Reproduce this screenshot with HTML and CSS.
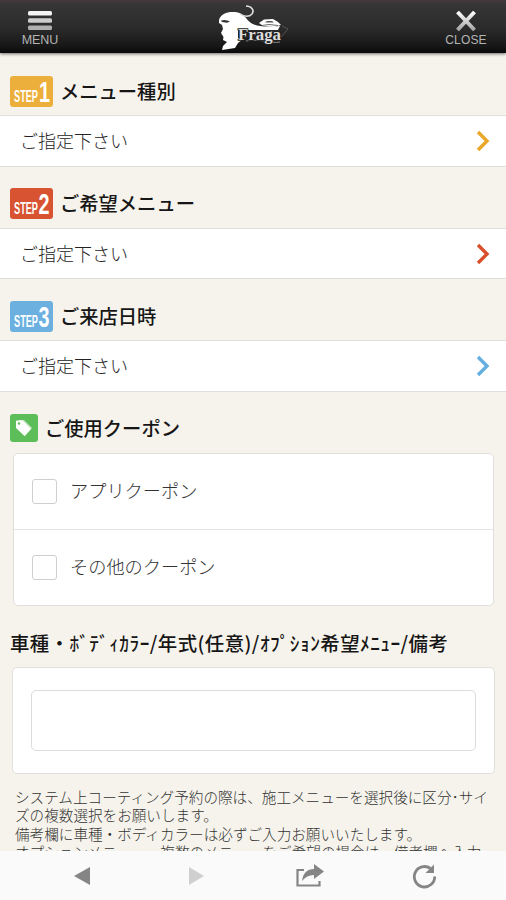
FILE: index.html
```html
<!DOCTYPE html>
<html lang="ja">
<head>
<meta charset="utf-8">
<title>ご予約</title>
<link rel="stylesheet" href="styles.css">
</head>
<body>
<div class="app">
  <header class="topbar">
    <div class="top-btn menu">
      <svg width="26" height="22" viewBox="0 0 26 22">
        <defs><linearGradient id="metal" gradientUnits="userSpaceOnUse" x1="0" y1="2" x2="0" y2="19"><stop offset="0" stop-color="#fff"/><stop offset="1" stop-color="#aaa"/></linearGradient></defs>
        <rect x="1" y="1" width="24" height="4.5" rx="1.5" fill="#f4f4f4"/>
        <rect x="1" y="8.2" width="24" height="4.5" rx="1.5" fill="#ccc"/>
        <rect x="1" y="15.4" width="24" height="4.5" rx="1.5" fill="#b0b0b0"/>
      </svg>
      <span>MENU</span>
    </div>
    <svg class="logo" width="76" height="50" viewBox="0 0 76 50">
      <path d="M1 20C3 13 11 11 20 12.500C26 14 28 19 33 23C39 27 50 27 62 26L60 30L20 30V38L25 39L20 43L17 48L4 50L5 46L9 42L5 40L5.500 37L3 33L5 29L4 25L1 23Z" fill="#fff"/>
      <path d="M28 6C33 6 37 10 34 14C31.500 17 26 17 22 14" fill="none" stroke="#ddd" stroke-width="1.500"/>
      <path d="M3 20.500C6 19.500 9 19.800 12 21.500L9 22.800L4 22Z" fill="#333"/>
      <path d="M41 23L46 19.500L55 19L60 22L63 25L56 27L45 26Z" fill="#fff"/>
      <path d="M47 22.500L49 21H54L56 22.500Z" fill="#555"/>
      <path d="M44 25.500L51 24.500L60 25.500" fill="none" stroke="#444" stroke-width=".8"/>
      <path d="M28 41C43 38 52 44 62 42" fill="none" stroke="#888" stroke-width="1"/>
      <text class="logo-text" x="20" y="40" textLength="43" lengthAdjust="spacingAndGlyphs">Fraga</text>
      <path d="M64 26L70 29L63 37" fill="none" stroke="#555" stroke-width="1"/>
    </svg>
    <div class="top-btn close">
      <svg width="24" height="22" viewBox="0 0 24 22">
        <path d="M3.500 2L20.500 20M20.500 2L3.500 20" stroke="url(#metal)" stroke-width="4"/>
      </svg>
      <span>CLOSE</span>
    </div>
  </header>

  <main class="content">
    <h2 class="heading">
      <svg class="step amber" width="43" height="31" viewBox="0 0 43 31"><text x="4" y="26" class="st" textLength="24" lengthAdjust="spacingAndGlyphs">STEP</text><text x="29" y="26" class="num" textLength="11" lengthAdjust="spacingAndGlyphs">1</text></svg>
      <span>メニュー種別</span>
    </h2>
    <div class="row"><span>ご指定下さい</span><svg class="chev" width="14" height="22" viewBox="0 0 14 22"><path d="M2 2L11 11L2 20" stroke="#eba728"/></svg></div>

    <h2 class="heading">
      <svg class="step red" width="43" height="31" viewBox="0 0 43 31"><text x="4" y="26" class="st" textLength="24" lengthAdjust="spacingAndGlyphs">STEP</text><text x="28.500" y="26" class="num" textLength="11" lengthAdjust="spacingAndGlyphs">2</text></svg>
      <span>ご希望メニュー</span>
    </h2>
    <div class="row"><span>ご指定下さい</span><svg class="chev" width="14" height="22" viewBox="0 0 14 22"><path d="M2 2L11 11L2 20" stroke="#d94f2c"/></svg></div>

    <h2 class="heading">
      <svg class="step blue" width="43" height="31" viewBox="0 0 43 31"><text x="4" y="26" class="st" textLength="24" lengthAdjust="spacingAndGlyphs">STEP</text><text x="28.500" y="26" class="num" textLength="11" lengthAdjust="spacingAndGlyphs">3</text></svg>
      <span>ご来店日時</span>
    </h2>
    <div class="row"><span>ご指定下さい</span><svg class="chev" width="14" height="22" viewBox="0 0 14 22"><path d="M2 2L11 11L2 20" stroke="#65afe0"/></svg></div>

    <h2 class="heading coupon">
      <svg class="tag" width="28" height="28" viewBox="0 0 28 28"><path d="M9 6H14L22 14L15 22L7 14Z" fill="#c3e6c0"/><path d="M7 6.500H12.500L21 15L14.500 22L6 14V7.500Q6 6.500 7 6.500Z" fill="#fff"/><circle cx="9" cy="9.500" r="1.200" fill="#5dbd58"/></svg>
      <span>ご使用クーポン</span>
    </h2>
    <div class="card options">
      <div class="option"><i class="box"></i><span>アプリクーポン</span></div>
      <div class="option"><i class="box"></i><span>その他のクーポン</span></div>
    </div>

    <h2 class="heading plain"><span>車種・ﾎﾞﾃﾞｨｶﾗｰ/年式(任意)/ｵﾌﾟｼｮﾝ希望ﾒﾆｭｰ/備考</span></h2>
    <div class="card memo"><div class="field"></div></div>

    <p class="note">システム上コーティング予約の際は、施工メニューを選択後に区分･サイ<br>ズの複数選択をお願いします。<br>備考欄に車種・ボディカラーは必ずご入力お願いいたします。<br>オプションメニュー、複数のメニューをご希望の場合は、備考欄へ入力</p>
  </main>

  <footer class="toolbar">
    <svg width="16" height="20" viewBox="0 0 16 20"><path d="M0 10L16 1V19Z" fill="#858585"/></svg>
    <svg width="16" height="20" viewBox="0 0 16 20"><path d="M16 10L1 1V19Z" fill="#cfcfcf"/></svg>
    <svg width="30" height="24" viewBox="0 0 30 24"><path d="M9 6H2.500V21.500H24.500V17" fill="none" stroke="#858585" stroke-width="2.200"/><path d="M7 17C8 9 12 5 19 5V0L29 7.500L19 15V11C14 11 10 13 7 17Z" fill="#858585"/></svg>
    <svg width="26" height="26" viewBox="0 0 26 26"><path d="M19.500 5.500A10.200 10.200 0 1 0 23.700 13.500" fill="none" stroke="#858585" stroke-width="2.800"/><path d="M23 1.500V10H14.500Z" fill="#858585"/></svg>
  </footer>
</div>
</body>
</html>
```

FILE: styles.css
```css
* { box-sizing: border-box; }

body {
  margin: 0;
  font-family: "Noto Sans CJK JP", sans-serif;
  background: #f6f3ec;
  color: #161616;
}

.app {
  display: flex;
  flex-direction: column;
  height: 900px;
  overflow: hidden;
}

.topbar {
  flex: none;
  display: flex;
  justify-content: space-between;
  align-items: flex-start;
  height: 53px;
  padding: 0 15px 0 16px;
  background: linear-gradient(#44393a 0, #363636 4px, #2b2b2b 28px, #171717 46px, #090909 100%);
  box-shadow: 0 1px 3px rgba(0, 0, 0, .55);
}

.top-btn {
  display: flex;
  flex-direction: column;
  align-items: center;
  width: 48px;
  padding-top: 10px;
  font: 12.5px/15px "Liberation Sans", sans-serif;
  color: #b4b4b4;
}

.top-btn span { margin-top: 1px; }
.menu span { letter-spacing: -.1px; }
.close { width: 50px; }
.close span { font-size: 12px; letter-spacing: .15px; }

.logo { margin-left: 6px; }
.logo-text {
  font: bold 17px "Liberation Serif", serif;
  fill: #ddd;
  stroke: #222;
  stroke-width: 1.6px;
  paint-order: stroke;
}

.content {
  flex: 1;
  min-height: 0;
  overflow: hidden;
}

.heading {
  display: flex;
  align-items: center;
  gap: 7px;
  height: 61px;
  margin: 0;
  padding: 13px 10px 0;
  font-size: 19.3px;
  font-weight: 500;
  line-height: 28px;
  white-space: nowrap;
}

.heading span { margin-top: -1px; }
.heading:first-child { height: 62px; padding-top: 14px; }

.step { border-radius: 3px; overflow: visible; }
.amber { background: #edaf3c; }
.red { background: #d75332; }
.blue { background: #6bb0df; }

.st {
  font: bold 16px "Liberation Sans", sans-serif;
  fill: #fff;
}

.num {
  font: bold 29px "Liberation Sans", sans-serif;
  fill: #fff;
}

.row {
  display: flex;
  justify-content: space-between;
  align-items: center;
  height: 51.7px;
  padding: 0 16px 0 20px;
  background: #fff;
  border-top: 1.5px solid #e0dfdc;
  border-bottom: 1.5px solid #e0dfdc;
  font-size: 18px;
  font-weight: 300;
  color: #222;
}

.row span { margin-top: -2px; }

.chev path {
  fill: none;
  stroke-width: 3.4;
}

.heading.coupon { padding-top: 11px; }
.coupon span { margin-top: 0; }
.tag {
  background: #5dbd58;
  border-radius: 3px;
}

.card {
  background: #fff;
  border: 1px solid #e1dfdb;
  border-radius: 5px;
}

.options {
  height: 153px;
  margin: 0 12px 0 13px;
}

.option {
  display: flex;
  align-items: center;
  gap: 13px;
  height: 75px;
  padding-left: 18px;
  font-size: 18.2px;
  font-weight: 300;
  color: #333;
}

.option span { margin-top: -4px; }
.option + .option { height: 76px; border-top: 1px solid #e4e4e4; }

.box {
  width: 25px;
  height: 25px;
  border: 1px solid #cfcfcf;
  border-radius: 3px;
}

.heading.plain {
  padding-left: 10px;
  font-size: 19.4px;
  letter-spacing: .45px;
}

.memo {
  height: 107px;
  margin: 0 11px 0 12px;
  padding: 22px 18px;
}

.field {
  height: 61px;
  border: 1px solid #dcdcdc;
  border-radius: 5px;
}

.note {
  margin: 14px 0 0 15px;
  font-size: 14.6px;
  font-weight: 300;
  line-height: 18.3px;
  white-space: nowrap;
  color: #333;
}

.toolbar {
  flex: none;
  display: grid;
  grid-template-columns: repeat(4, 114px);
  justify-content: center;
  justify-items: center;
  align-items: center;
  height: 49px;
  background: #fafafa;
}
```
